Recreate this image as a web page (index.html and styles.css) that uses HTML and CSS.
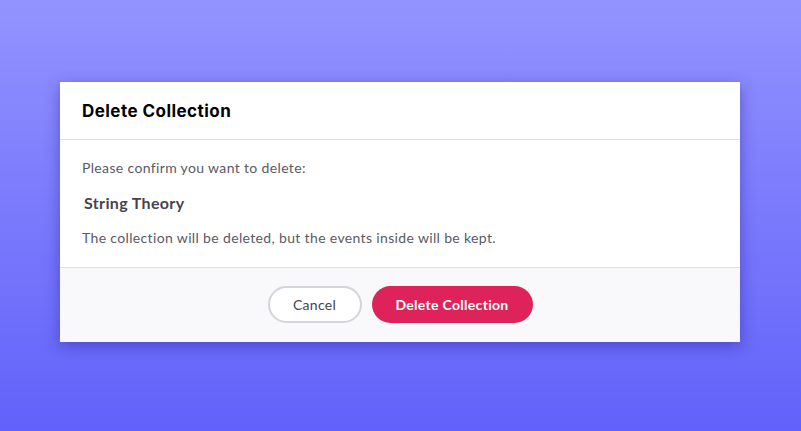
FILE: index.html
```html
<!DOCTYPE html>
<html lang="en">
<head>
    <meta charset="UTF-8">
    <meta name="viewport" content="width=device-width, initial-scale=1.0">
    <title>Delete Collection</title>
    <link rel="stylesheet" href="styles.css">
</head>
<body>

    <div class="modal">
        <div class="modal-header">
            <h2 class="modal-title">Delete Collection</h2>
        </div>

        <div class="modal-body">
            <p class="confirm">Please confirm you want to delete:</p>
            <p class="item-name">String Theory</p>
            <p class="note">The collection will be deleted, but the events inside will be kept.</p>
        </div>

        <div class="modal-footer">
            <button class="btn btn-cancel">Cancel</button>
            <button class="btn btn-delete">Delete Collection</button>
        </div>
    </div>

</body>
</html>
```

FILE: styles.css
```css
html, body {
    height: 100%;
}

body {
    margin: 0;
    background: linear-gradient(180deg, #9393ff 0%, #7c7cfd 45%, #6262fa 100%);
    font-family: Lato, "Open Sans", sans-serif;
}

.modal {
    width: 680px;
    margin: 82px 0 0 60px;
    background: #ffffff;
    box-shadow: 0 4px 14px rgba(40, 30, 140, 0.45);
}

.modal-header {
    height: 57px;
    padding: 0 22px;
    display: flex;
    align-items: center;
    border-bottom: 1px solid #e0e0ea;
}

.modal-title {
    margin: 0;
    font-family: Inter, "Noto Sans", sans-serif;
    font-size: 17px;
    font-weight: 700;
    color: #000000;
    letter-spacing: 0.45px;
}

.modal-body {
    padding: 18px 22px 19px;
    border-bottom: 1px solid #e0e0ea;
}

.modal-body p {
    margin: 0;
}

.confirm {
    font-size: 14px;
    line-height: 20px;
    color: #5a5a66;
    letter-spacing: 0.35px;
}

.item-name {
    margin-top: 15px !important;
    padding-left: 2px;
    font-size: 16px;
    font-weight: 700;
    line-height: 20px;
    color: #44444f;
    letter-spacing: 0.35px;
}

.note {
    margin-top: 15px !important;
    font-size: 14px;
    line-height: 20px;
    color: #5a5a66;
    letter-spacing: 0.35px;
}

.modal-footer {
    background: #f9f9fc;
    padding: 18px 0 19px;
    display: flex;
    justify-content: center;
    gap: 10px;
}

.btn {
    height: 37px;
    border-radius: 19px;
    font-family: Lato, "Open Sans", sans-serif;
    font-size: 14px;
    letter-spacing: 0.3px;
    cursor: pointer;
}

.btn-cancel {
    width: 94px;
    background: #ffffff;
    border: 2px solid #d4d4da;
    color: #44444f;
}

.btn-delete {
    width: 161px;
    background: #dd2359;
    border: none;
    color: #ffffff;
    font-weight: 700;
}
```
